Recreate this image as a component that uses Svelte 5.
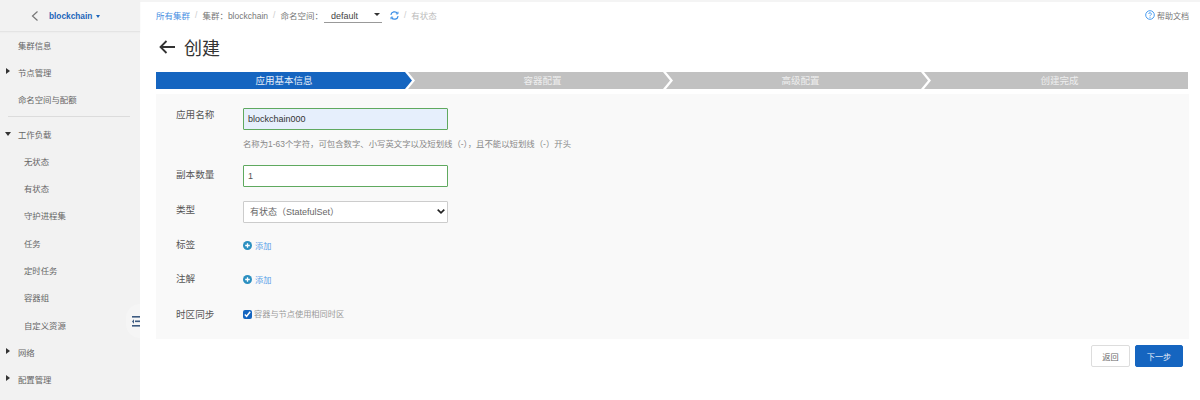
<script>
	const menu = [
		{ label: "集群信息" },
		{ label: "节点管理", arrow: "right" },
		{ label: "命名空间与配额", divider: true },
		{ label: "工作负载", arrow: "down" },
		{ label: "无状态", sub: true },
		{ label: "有状态", sub: true },
		{ label: "守护进程集", sub: true },
		{ label: "任务", sub: true },
		{ label: "定时任务", sub: true },
		{ label: "容器组", sub: true },
		{ label: "自定义资源", sub: true },
		{ label: "网络", arrow: "right" },
		{ label: "配置管理", arrow: "right" }
	];

	const steps = ["应用基本信息", "容器配置", "高级配置", "创建完成"];
</script>

<div class="page">
	<aside class="sidebar">
		<div class="side-head">
			<svg class="back" width="8" height="12" viewBox="0 0 8 12"><path d="M6.500 1.500 1.500 6l5 4.500" fill="none" stroke="#777" stroke-width="1.200" /></svg>
			<span class="cluster">blockchain</span>
			<span class="caret"></span>
		</div>
		<nav class="menu">
			{#each menu as item}
				<div class="item" class:sub={item.sub}>
					{#if item.arrow}
						<span class={"tri " + item.arrow}></span>
					{/if}
					{item.label}
				</div>
				{#if item.divider}
					<div class="divider"></div>
				{/if}
			{/each}
		</nav>
		<div class="collapse">
			<svg width="8" height="11" viewBox="0 0 8 11" fill="#3d5a80">
				<rect x="0" y="0" width="8" height="1.600" />
				<rect x="3" y="4.500" width="5" height="1.600" />
				<rect x="0" y="9" width="8" height="1.600" />
				<path d="M2 3.300v4.500L0 5.500z" />
			</svg>
		</div>
	</aside>

	<main class="main">
		<div class="crumbs">
			<a class="link">所有集群</a>
			<span class="sep">/</span>
			<span>集群：blockchain</span>
			<span class="sep">/</span>
			<span>命名空间：</span>
			<span class="ns">default<span class="ns-caret"></span></span>
			<svg class="refresh" width="9" height="9" viewBox="0 0 10 10" fill="none" stroke="#3a8ee6" stroke-width="1.400">
				<path d="M1 4.300A4 4 0 0 1 8.300 2.700M9 5.700A4 4 0 0 1 1.700 7.300" />
				<path d="M8.900.8v2.400H6.500M1.100 9.200V6.800h2.400" stroke-width="1" />
			</svg>
			<span class="sep">/</span>
			<span class="muted">有状态</span>
			<span class="help">
				<svg width="10" height="10" viewBox="0 0 10 10" fill="none" stroke="#4a9cf0">
					<circle cx="5" cy="5" r="4.300" />
					<path d="M3.700 4a1.300 1.300 0 1 1 1.900 1.200C5.100 5.500 5 5.800 5 6.300M5 7v.8" />
				</svg>
				帮助文档
			</span>
		</div>

		<h1 class="title">
			<svg width="16" height="14" viewBox="0 0 16 14" fill="none" stroke="#333" stroke-width="1.800"><path d="M16 7H1.500M7.500 1 1.500 7l6 6" /></svg>
			创建
		</h1>

		<div class="steps">
			{#each steps as step, i}
				<div class="step" class:active={i === 0}>{step}</div>
			{/each}
		</div>

		<form class="panel">
			<div class="row">
				<span class="label">应用名称</span>
				<input class="input ok filled" value="blockchain000" />
			</div>
			<p class="hint">名称为1-63个字符，可包含数字、小写英文字以及短划线（-），且不能以短划线（-）开头</p>
			<div class="row centered">
				<span class="label">副本数量</span>
				<input class="input ok" value="1" />
			</div>
			<div class="row select-row">
				<span class="label">类型</span>
				<div class="select-wrap">
					<select class="input select">
						<option>有状态（StatefulSet）</option>
					</select>
					<svg width="8" height="5" viewBox="0 0 8 5" fill="none" stroke="#222" stroke-width="1.700"><path d="M.7.7 4 3.800 7.300.7" /></svg>
				</div>
			</div>
			<div class="row add-row">
				<span class="label">标签</span>
				<span class="add">
					<svg width="9" height="9" viewBox="0 0 9 9"><circle cx="4.500" cy="4.500" r="4.500" fill="#2b8fc0" /><path d="M2.200 4.500h4.600M4.500 2.200v4.600" stroke="#fff" stroke-width="1.300" /></svg>
					添加
				</span>
			</div>
			<div class="row add-row">
				<span class="label">注解</span>
				<span class="add">
					<svg width="9" height="9" viewBox="0 0 9 9"><circle cx="4.500" cy="4.500" r="4.500" fill="#2b8fc0" /><path d="M2.200 4.500h4.600M4.500 2.200v4.600" stroke="#fff" stroke-width="1.300" /></svg>
					添加
				</span>
			</div>
			<div class="row tz-row">
				<span class="label">时区同步</span>
				<label class="check">
					<input type="checkbox" checked />
					容器与节点使用相同时区
				</label>
			</div>
		</form>

		<div class="actions">
			<button type="button" class="btn">返回</button>
			<button type="button" class="btn primary">下一步</button>
		</div>
	</main>
</div>

<style>
	:global(body) {
		background: #fff;
		font-family: "Liberation Sans", "Noto Sans CJK SC", sans-serif;
	}

	.page {
		display: flex;
		width: 1200px;
		height: 400px;
		overflow: hidden;
		color: #555;
	}

	.sidebar {
		position: relative;
		flex: none;
		width: 140px;
		background: #f2f2f2;
	}

	.side-head {
		display: flex;
		align-items: center;
		height: 31px;
		padding-left: 31px;
		border-bottom: 1px solid #e4e4e4;
		box-shadow: 0 1px 1px #eee;
	}

	.back {
		margin-right: 10px;
	}

	.cluster {
		color: #1b65b9;
		font-size: 8.300px;
		font-weight: 700;
	}

	.caret {
		margin: 1px 0 0 4px;
		border-top: 3px solid #1b65b9;
		border-left: 2.500px solid transparent;
		border-right: 2.500px solid transparent;
	}

	.menu {
		margin-top: -1px;
	}

	.item {
		position: relative;
		display: flex;
		align-items: center;
		height: 27.300px;
		padding-left: 18px;
		font-size: 8.400px;
		color: #666;
	}

	.item.sub {
		padding-left: 24px;
	}

	.tri {
		position: absolute;
		left: 6px;
		top: 50%;
	}

	.tri.right {
		margin-top: -4px;
		border-left: 4px solid #333;
		border-top: 3px solid transparent;
		border-bottom: 3px solid transparent;
	}

	.tri.down {
		left: 5px;
		margin-top: -2px;
		border-top: 4px solid #333;
		border-left: 3px solid transparent;
		border-right: 3px solid transparent;
	}

	.divider {
		height: 1px;
		margin: 3px 10px 3px 8px;
		background: #dcdcdc;
	}

	.collapse {
		position: absolute;
		left: 126px;
		top: 304px;
		display: flex;
		align-items: center;
		justify-content: flex-end;
		width: 14px;
		height: 34px;
		border-radius: 17px 0 0 17px;
		background: #f5f5f5;
	}

	.main {
		flex: 1;
		min-width: 0;
		padding: 0 11px 0 16px;
		border-top: 2px solid #f4f4f4;
	}

	.crumbs {
		display: flex;
		align-items: center;
		height: 26px;
		font-size: 8.500px;
		color: #777;
	}

	.link {
		color: #4a90e2;
	}

	.sep {
		margin: 0 5px;
		color: #ccc;
	}

	.ns {
		position: relative;
		width: 58px;
		height: 14px;
		margin: 2px 8px 0 1px;
		padding: 2px 0 0 7px;
		box-sizing: border-box;
		border-bottom: 1px solid #999;
		color: #444;
		font-size: 9px;
	}

	.ns-caret {
		position: absolute;
		right: 2px;
		top: 4px;
		border-top: 3px solid #333;
		border-left: 3.500px solid transparent;
		border-right: 3.500px solid transparent;
	}

	.muted {
		color: #bbb;
	}

	.help {
		display: flex;
		align-items: center;
		gap: 2px;
		margin-left: auto;
		font-size: 8px;
		color: #777;
	}

	.title {
		display: flex;
		align-items: center;
		gap: 9px;
		height: 38px;
		margin: 0 0 6px;
		padding-left: 3px;
		font-size: 18px;
		font-weight: 400;
		color: #333;
	}

	.steps {
		display: flex;
		width: 1032px;
	}

	.step {
		flex: none;
		width: 262px;
		margin-right: -4px;
		padding-left: 7px;
		box-sizing: border-box;
		height: 17px;
		line-height: 17px;
		text-align: center;
		background: #c1c1c1;
		color: #eee;
		font-size: 9.500px;
		clip-path: polygon(0 0, calc(100% - 7px) 0, 100% 50%, calc(100% - 7px) 100%, 0 100%, 7px 50%);
	}

	.step.active {
		width: 256px;
		padding-left: 0;
		background: #1565c0;
		color: #e8f0fa;
		clip-path: polygon(0 0, calc(100% - 7px) 0, 100% 50%, calc(100% - 7px) 100%, 0 100%);
	}

	.step:last-child {
		width: 264px;
		margin-right: 0;
		clip-path: polygon(0 0, 100% 0, 100% 100%, 0 100%, 7px 50%);
	}

	.panel {
		height: 245px;
		margin-top: 5px;
		padding: 14px 0 0 20px;
		box-sizing: border-box;
		background: #f9f9f9;
	}

	.row {
		display: flex;
		align-items: flex-start;
	}

	.label {
		flex: none;
		width: 67px;
		font-size: 9.600px;
		line-height: 14px;
		color: #555;
	}

	.centered .label {
		margin-top: 3px;
	}

	.select-row .label {
		margin-top: 2px;
	}

	.input {
		width: 205px;
		height: 22px;
		margin: 0;
		padding: 0 4px;
		box-sizing: border-box;
		border: 1px solid #ccc;
		border-radius: 1px;
		background: #fff;
		font: 9px "Liberation Sans", "Noto Sans CJK SC", sans-serif;
		color: #555;
		outline: none;
	}

	.input.ok {
		border-color: #5fa95f;
	}

	.input.filled {
		background: #e6effc;
		color: #333;
	}

	.select-wrap {
		position: relative;
		display: flex;
	}

	.select-wrap svg {
		position: absolute;
		right: 3px;
		top: 8px;
		pointer-events: none;
	}

	.select {
		appearance: none;
		padding: 0 6px;
		color: #666;
	}

	.hint {
		margin: 0;
		height: 35px;
		padding: 9px 0 0 67px;
		box-sizing: border-box;
		font-size: 8.400px;
		line-height: 11px;
		color: #888;
	}

	.select-row {
		margin-top: 14px;
	}

	.add-row {
		margin-top: 15px;
		height: 19px;
	}

	.add-row + .add-row {
		margin-top: 15px;
	}

	.add {
		display: flex;
		align-items: center;
		gap: 3px;
		margin-top: 1px;
		font-size: 8.200px;
		color: #5a9fe8;
	}

	.tz-row {
		margin-top: 17px;
	}

	.check {
		display: flex;
		align-items: center;
		gap: 2px;
		font-size: 8.200px;
		line-height: 14px;
		color: #999;
	}

	.check input {
		width: 9px;
		height: 9px;
		margin: -2px 0 0;
		accent-color: #1565c0;
	}

	.actions {
		display: flex;
		justify-content: flex-end;
		gap: 5px;
		margin-top: 6px;
		padding-right: 6px;
	}

	.btn {
		height: 22px;
		width: 39px;
		padding: 0;
		border: 1px solid #ddd;
		border-radius: 2px;
		background: #fff;
		color: #666;
		font: 8.200px "Liberation Sans", "Noto Sans CJK SC", sans-serif;
	}

	.btn.primary {
		width: 48px;
		border-color: #1565c0;
		background: #1565c0;
		color: #e8f0fa;
	}
</style>
